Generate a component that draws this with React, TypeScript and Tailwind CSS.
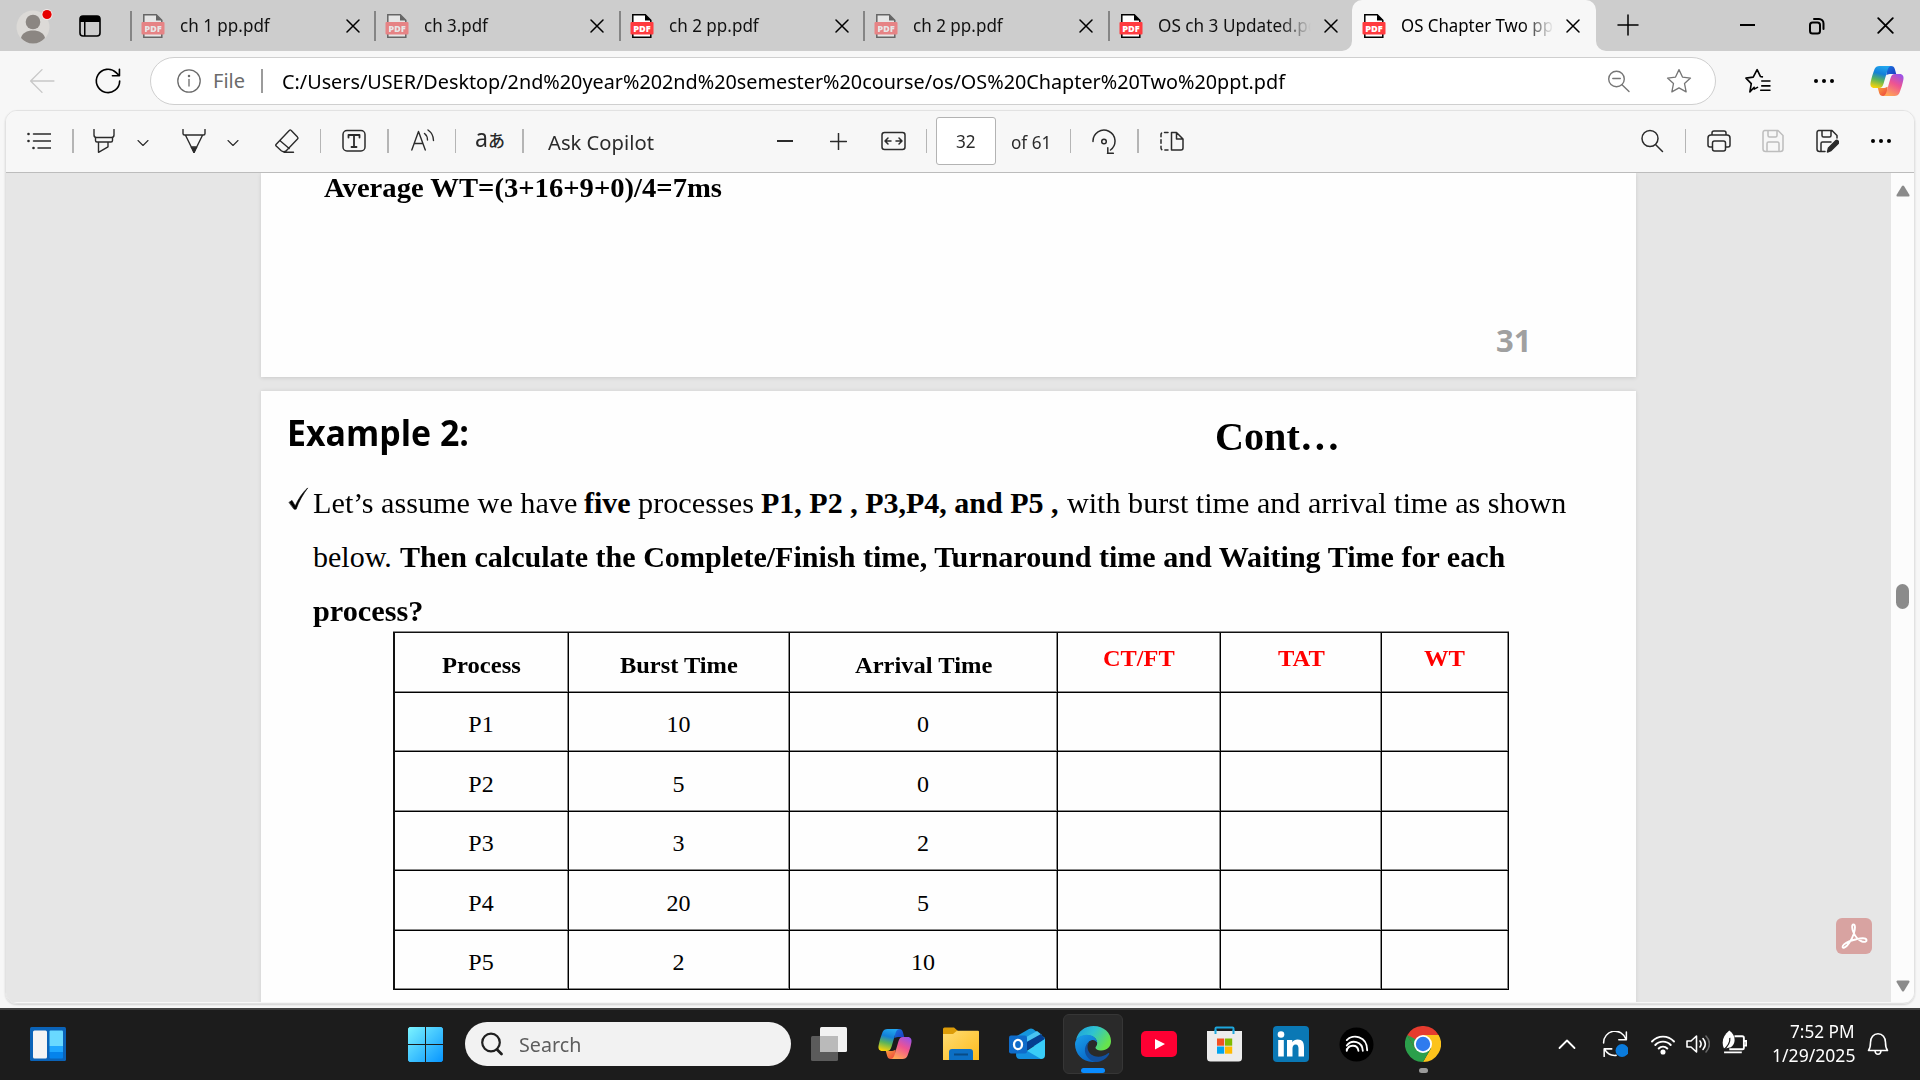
import React, { useLayoutEffect, useRef, useState } from "react";

/* Text that is stretched horizontally to fill the width given by its class. */
function Fit({ children, className = "" }: { children: string; className?: string }) {
  const outer = useRef<HTMLSpanElement>(null);
  const inner = useRef<HTMLSpanElement>(null);
  const [k, setK] = useState(1);
  useLayoutEffect(() => {
    if (outer.current && inner.current) setK(outer.current.clientWidth / inner.current.offsetWidth);
  }, []);
  return (
    <span ref={outer} className={"inline-block shrink-0 whitespace-pre text-left " + className}>
      <span ref={inner} className="inline-block origin-left" style={{ transform: `scaleX(${k})` }}>
        {children}
      </span>
    </span>
  );
}

type IconProps = { className?: string; children: React.ReactNode; box?: string; sw?: number };
function Icon({ className = "w-6 h-6", children, box = "0 0 24 24", sw = 1.5 }: IconProps) {
  return (
    <svg viewBox={box} className={"shrink-0 " + className} fill="none" stroke="currentColor" strokeWidth={sw} strokeLinecap="round" strokeLinejoin="round">
      {children}
    </svg>
  );
}

const Cross = ({ className = "", sw = 1.5 }: { className?: string; sw?: number }) => (
  <Icon box="0 0 14 14" sw={sw} className={className}>
    <path d="M1 1l12 12M13 1L1 13" />
  </Icon>
);

const Sep = ({ className = "" }: { className?: string }) => <div className={"h-6 shrink-0 bg-[#b5b5b5] " + className} />;

function PdfIcon({ dim }: { dim?: boolean }) {
  return (
    <svg viewBox="0 0 24 26" className={"h-[26px] w-6 shrink-0 " + (dim ? "opacity-50" : "")}>
      <path d="M2.800 1.800h12.500l5.500 5.400v17H2.800z" fill="#fff" stroke="#000" strokeWidth="1.500" />
      <path d="M15 1.500v6h6z" fill="#000" />
      <rect x="0.500" y="9" width="23" height="12.500" rx="1" fill="#ff3b3f" />
      <text x="12" y="18.700" textAnchor="middle" fontSize="9" fontWeight="800" fontFamily="Open Sans, sans-serif" fill="#fff" textLength="17.500" lengthAdjust="spacingAndGlyphs">PDF</text>
    </svg>
  );
}

function Copilot({ className, id }: { className: string; id: string }) {
  return (
    <svg viewBox="0 0 34 32" className={"shrink-0 " + className}>
      <defs>
        <linearGradient id={id + "a"} x1="0.6" y1="0" x2="0.35" y2="1">
          <stop offset="0" stopColor="#22a6ee" />
          <stop offset="0.35" stopColor="#1380d8" />
          <stop offset="0.65" stopColor="#5cb45a" />
          <stop offset="1" stopColor="#f5d20b" />
        </linearGradient>
        <linearGradient id={id + "b"} x1="0.8" y1="0" x2="0.3" y2="1">
          <stop offset="0" stopColor="#9a52e8" />
          <stop offset="0.45" stopColor="#ee5392" />
          <stop offset="1" stopColor="#ffa755" />
        </linearGradient>
        <linearGradient id={id + "c"} x1="0" y1="0" x2="1" y2="1">
          <stop offset="0" stopColor="#1a75e0" />
          <stop offset="1" stopColor="#1b3bc0" />
        </linearGradient>
        <linearGradient id={id + "d"} x1="0" y1="0" x2="1" y2="1">
          <stop offset="0" stopColor="#f9a33c" />
          <stop offset="1" stopColor="#ee4040" />
        </linearGradient>
      </defs>
      <path d="M17 1h4c2.300 0 3.200 1 3.900 3.300l1.300 4.700h-5c-2 0-3 .2-4.800 1.200z" fill={`url(#${id}c)`} />
      <path d="M17 31h-4c-2.300 0-3.200-1-3.900-3.300L7.800 23h5c2 0 3-.2 4.800-1.200z" fill={`url(#${id}d)`} />
      <path d="M9.500 1H21c-2 .6-2.800 2-3.600 4.500L13.600 18.500c-1 3.200-2 4.500-4.600 4.500H4.500C1 23 0 20.500.6 17.500 1.500 13 3 8 4.600 4 5.500 1.900 7 1 9.500 1z" fill={`url(#${id}a)`} />
      <path d="M24.500 31H13c2-.6 2.800-2 3.600-4.500l3.800-13c1-3.200 2-4.500 4.600-4.500h4.500c3.500 0 4.500 2.500 3.900 5.500-.9 4.500-2.400 9.500-4 13.500-.9 2.100-2.400 3-4.900 3z" fill={`url(#${id}b)`} />
    </svg>
  );
}

const tabs = [
  { title: "ch 1 pp.pdf", dim: true, width: "w-[90px]" },
  { title: "ch 3.pdf", dim: true, width: "w-[64px]" },
  { title: "ch 2 pp.pdf", dim: false, width: "w-[90px]" },
  { title: "ch 2 pp.pdf", dim: true, width: "w-[90px]" },
  { title: "OS ch 3 Updated.pdf", dim: false, width: "w-[166px]" },
];

function TabStrip() {
  return (
    <div className="flex h-[51px] bg-[#cdcdcd]">
      <div className="flex w-[130px] shrink-0 items-center">
        <svg viewBox="0 0 40 44" className="ml-[14px] h-11 w-10">
          <circle cx="19" cy="23" r="16.500" fill="#dcdad7" />
          <circle cx="19" cy="18" r="7.300" fill="#8b8682" />
          <path d="M7 34c1-5 6-7.500 12-7.500S30 29 31 34c-3 3.500-7 5.500-12 5.500S10 37.500 7 34z" fill="#8b8682" />
          <circle cx="33" cy="10.500" r="5.500" fill="#f3eaea" />
          <circle cx="33" cy="10.500" r="4.600" fill="#e60000" />
        </svg>
        <svg viewBox="0 0 22 22" className="ml-[25px] h-[22px] w-[22px]">
          <rect x="1" y="1" width="20" height="20" rx="3" fill="none" stroke="#000" strokeWidth="1.600" />
          <path d="M1 7V4a3 3 0 013-3h14a3 3 0 013 3v3zM5 7h1.500v14H5z" fill="#000" />
        </svg>
      </div>
      {tabs.map((t, i) => (
        <div key={i} className="flex w-[244.400px] shrink-0 items-center">
          <div className="h-[30px] w-[2px] bg-[#858585]" />
          <div className="ml-[9px]"><PdfIcon dim={t.dim} /></div>
          <div className={"ml-[15px] flex h-8 w-[156px] items-center overflow-hidden text-[18px] text-[#111] " + (i === 4 ? "[mask-image:linear-gradient(90deg,#000_78%,transparent_98%)]" : "")}>
            <Fit className={t.width}>{t.title}</Fit>
          </div>
          <Cross className="ml-[10px] h-[14px] w-[14px]" />
        </div>
      ))}
      <div className="relative flex h-[51px] w-[244px] items-center rounded-t-[10px] bg-[#f7f7f7]">
        <svg viewBox="0 0 10 10" className="absolute -left-[10px] bottom-0 h-[10px] w-[10px]"><path d="M10 0v10H0A10 10 0 0010 0z" fill="#f7f7f7" /></svg>
        <svg viewBox="0 0 10 10" className="absolute -right-[10px] bottom-0 h-[10px] w-[10px]"><path d="M0 0v10h10A10 10 0 010 0z" fill="#f7f7f7" /></svg>
        <div className="ml-[10px]"><PdfIcon /></div>
        <div className="ml-[15px] flex h-8 w-[156px] items-center overflow-hidden text-[18px] [mask-image:linear-gradient(90deg,#000_78%,transparent_98%)]">
          <Fit className="w-[158px]">OS Chapter Two ppt</Fit>
        </div>
        <Cross className="ml-[9px] h-[14px] w-[14px]" />
      </div>
      <Icon box="0 0 22 22" className="ml-[21px] mt-[14px] h-[22px] w-[22px]"><path d="M11 1v20M1 11h20" /></Icon>
      <div className="ml-[101px] mt-[24px] h-[2px] w-[15px] bg-black" />
      <Icon box="0 0 18 20" sw={2} className="ml-[53px] mt-[16px] h-5 w-[18px]">
        <rect x="2" y="6.500" width="10" height="11" rx="2.500" />
        <path d="M6 3h5a4.500 4.500 0 014.500 4.500V13" />
      </Icon>
      <Cross sw={1.5} className="ml-[51px] mt-[17px] h-[17px] w-[17px]" />
    </div>
  );
}

function AddressRow() {
  return (
    <div className="flex h-[59px] shrink-0 items-center pt-px">
      <Icon className="ml-[29px] h-[26px] w-[26px] text-[#c8c8c8]"><path d="M23 12H1.500M12 1.500L1.500 12 12 22.500" strokeWidth="1.300" /></Icon>
      <Icon className="ml-[39px] h-[28px] w-[28px]"><path d="M22 12a10 10 0 11-3-7.200l2.500 2.500M21.800 2v5.500h-6" strokeWidth="1.400" /></Icon>
      <div className="ml-[28px] flex h-12 w-[1566px] items-center rounded-full border border-[#cfcfcf] bg-white">
        <Icon className="ml-[26px] h-6 w-6 text-[#6b6b6b]" sw={1.3}><circle cx="12" cy="12" r="11.200" /><path d="M12 10.500v6.500" /><circle cx="12" cy="7" r=".6" fill="currentColor" /></Icon>
        <Fit className="ml-[12px] w-[32px] text-[20px] text-[#6b6b6b]">File</Fit>
        <div className="ml-[16px] h-6 w-[2px] bg-[#9b9b9b]" />
        <Fit className="ml-[19px] w-[1003px] text-[20.500px]">C:/Users/USER/Desktop/2nd%20year%202nd%20semester%20course/os/OS%20Chapter%20Two%20ppt.pdf</Fit>
        <Icon className="ml-auto h-[24px] w-[24px] text-[#767676]" sw={1.4}><circle cx="9.500" cy="10" r="7.800" /><path d="M15 15.800l7 6.700M5.800 9.500h7.500" /></Icon>
        <Icon className="ml-[35px] mr-[23px] h-[26px] w-[26px] text-[#767676]" sw={1.2}><path d="M12 1.500l3.200 6.900 7.400.9-5.500 5.100 1.500 7.600L12 18.300 5.400 22l1.500-7.600L1.400 9.300l7.400-.9z" /></Icon>
      </div>
      <Icon className="ml-[29px] h-[26px] w-[26px]" sw={1.5}><path d="M8.500 17.800L4.500 22l1.300-7.600L.9 9.300l6.700-.9L11.200 1.500l3 6.300 1.800.4M15.500 12H23M15.500 16.500H23M14.500 20.500H23M8.500 19.500l3-1.600" /></Icon>
      <svg viewBox="0 0 22 6" className="ml-[42px] h-[6px] w-[22px]"><circle cx="3" cy="3" r="2" /><circle cx="11" cy="3" r="2" /><circle cx="19" cy="3" r="2" /></svg>
      <Copilot id="top" className="ml-[35px] h-[32px] w-[34px]" />
    </div>
  );
}

const Chevron = () => <Icon box="0 0 12 12" sw={1.1} className="ml-[21px] mt-1 h-3 w-3"><path d="M1 3.500l5 5 5-5" /></Icon>;

function Toolbar() {
  return (
    <div className="flex h-[62px] shrink-0 items-center border-b border-[#bcbcbc] bg-[#f7f7f7] pb-px text-[#2b2b2b]">
      <Icon className="ml-[21px] h-6 w-6"><path d="M6.500 5H24M6.500 12H24M11 19H24" /><g fill="currentColor" stroke="none"><circle cx="1.500" cy="5" r="1.300" /><circle cx="1.500" cy="12" r="1.300" /><circle cx="6.500" cy="19" r="1.300" /></g></Icon>
      <Sep className="ml-[21px] w-[2px]" />
      <Icon className="ml-[18px] h-6 w-6" sw={1.4}><path d="M2 .5v5.500a2.500 2.500 0 002.500 2.500h15A2.500 2.500 0 0022 6V.5M3.500 8.800v2.700a1.500 1.500 0 001.500 1.500h14a1.500 1.500 0 001.500-1.500V8.800M6.500 13v10.300l9.500-5.500V13" /></Icon>
      <Chevron />
      <Icon className="ml-[33px] h-6 w-6" sw={1.4}><path d="M1 .5v4A1.500 1.500 0 002.500 6h19A1.500 1.500 0 0023 4.500v-4M3.500 6.200L12 23.500l8.500-17.300M9 18h6" /><path d="M10 19h4l-2 4.500z" fill="currentColor" /></Icon>
      <Chevron />
      <Icon className="ml-[36px] h-6 w-6" sw={1.4}><path d="M1 15.500L14.500 1.200a1 1 0 011.500 0l6.500 6.900a1.500 1.500 0 010 2L11.500 21.500a4 4 0 01-5.500.1L1.200 17a1 1 0 01-.2-1.500zM4.800 11.500l9.400 8M9 23.300h9.500" /></Icon>
      <Sep className="ml-[21px] w-px" />
      <Icon className="ml-[21px] h-6 w-6" sw={1.5}><rect x="1" y="1.500" width="22" height="20.500" rx="4" /><path d="M6.500 8.500V6h11v2.500M12 6v12M9.500 18h5" strokeWidth="1.800" /></Icon>
      <Sep className="ml-[21px] w-[2px]" />
      <Icon className="ml-[22px] h-6 w-6" sw={1.4}><path d="M.8 21L7.500 2.500 14.300 21M3.200 14.500h8.700M13.500 4.500c2 1.500 3 3.500 3 6.500M17 1c3.500 2.500 5.500 6 5.500 10.500" /></Icon>
      <Sep className="ml-[20px] w-px" />
      <div className="ml-[19px] flex w-7 items-center pb-1 text-[25px] leading-6"><Fit className="mt-[-4px] w-[13px]">a</Fit><span className="mt-[2px] font-['Noto_Sans_CJK_JP'] text-[17px] font-medium">あ</span></div>
      <Sep className="ml-[19px] w-[2px]" />
      <Fit className="ml-[24px] mt-[3px] w-[106px] text-[20px]">Ask Copilot</Fit>
      <div className="ml-[123px] h-[1.500px] w-4 bg-[#2b2b2b]" />
      <Icon box="0 0 17 17" className="ml-[37px] h-[17px] w-[17px]"><path d="M8.500.5v16M.5 8.500h16" /></Icon>
      <Icon box="0 0 25 20" className="ml-[34px] h-5 w-[25px]"><rect x="1" y="1.500" width="23" height="17" rx="2.500" /><path d="M10 10H4.500M7 7l-3 3 3 3M15 10h5.500M18 7l3 3-3 3" /></Icon>
      <Sep className="ml-[20px] w-px" />
      <div className="ml-[9px] flex h-12 w-[60px] items-center justify-center rounded-[3px] border border-[#b3b3b3] bg-white pt-px text-[18px]"><Fit className="w-[20px]">32</Fit></div>
      <Fit className="ml-[15px] mt-[2px] w-[40px] text-[18px]">of 61</Fit>
      <Sep className="ml-[19px] w-px" />
      <Icon className="ml-[21px] h-[25px] w-6"><path d="M1 12A11 11 0 1118.500 20.500M15.500 23.800h5.800M15.800 23.500v-5.200" /><circle cx="12" cy="12" r="2.300" /></Icon>
      <Sep className="ml-[21px] w-[2px]" />
      <Icon className="ml-[21px] h-6 w-6" sw={1.5}><path d="M11.500 3.500V21H21a2 2 0 002-2v-9l-6.500-6.500zM16.500 3.500V10H23" /><path d="M8 3.500H3A2 2 0 001 5.500V19a2 2 0 002 2h5" strokeDasharray="3.500 3" /></Icon>
      <div className="ml-auto mr-[22px] flex items-center">
        <Icon className="h-6 w-6"><circle cx="9" cy="9.500" r="8" /><path d="M14.500 15.500l7 7" /></Icon>
        <Sep className="ml-[20px] w-px" />
        <Icon className="ml-[21px] h-6 w-6"><path d="M5 18H3a2 2 0 01-2-2V9a3 3 0 013-3h16a3 3 0 013 3v7a2 2 0 01-2 2h-2M5 6V4a2 2 0 012-2h10a2 2 0 012 2v2" /><rect x="5.500" y="12" width="13" height="10" rx="2" /></Icon>
        <Icon className="ml-[30px] h-6 w-6 text-[#bdbdbd]"><path d="M3.500 1.500H17l5 5v13.500a2.500 2.500 0 01-2.500 2.500h-15A2.500 2.500 0 012 20V3.500a2 2 0 011.500-2zM7 1.500v5A1.500 1.500 0 008.500 8h6A1.500 1.500 0 0016 6.500v-5M6 22.500V14.500A1.500 1.500 0 017.500 13h9a1.500 1.500 0 011.500 1.500v8" /></Icon>
        <Icon className="ml-[30px] h-6 w-6"><path d="M10 22.500H4.500A2.500 2.500 0 012 20V3.500a2 2 0 011.500-2H17l5 5V9M7 1.500v5A1.500 1.500 0 008.500 8h6A1.500 1.500 0 0016 6.500v-5M6 22.500V14.500A1.500 1.500 0 017.500 13H16" /><path d="M12.500 23l1-4 7.500-7.500c1-1 3.500 1.300 2.400 2.600L16 21.500z" fill="currentColor" /></Icon>
        <svg viewBox="0 0 22 6" className="ml-[31px] h-[6px] w-[22px]"><circle cx="3" cy="3" r="2" /><circle cx="11" cy="3" r="2" /><circle cx="19" cy="3" r="2" /></svg>
      </div>
    </div>
  );
}

const rows = [
  ["P1", "10", "0"],
  ["P2", "5", "0"],
  ["P3", "3", "2"],
  ["P4", "20", "5"],
  ["P5", "2", "10"],
];
const cell = "border-b border-r border-black shadow-[inset_-1px_-1px_0_#8a8a8a] flex items-center justify-center";

function ProcessTable() {
  return (
    <div className="ml-[132px] grid w-[1116px] auto-rows-[59.450px] grid-cols-[174px_221px_268px_163px_161px_127px] grid-rows-[60px] border-l-2 border-t border-[#111] text-[24px] shadow-[0_-1px_0_#8a8a8a]">
      <div className={cell + " pr-px pt-[5px] font-bold"}><Fit className="w-[79px]">Process</Fit></div>
      <div className={cell + " pt-[5px] font-bold"}><Fit className="w-[118px]">Burst Time</Fit></div>
      <div className={cell + " pr-px pt-[5px] font-bold"}><Fit className="w-[137px]">Arrival Time</Fit></div>
      <div className={cell + " pb-[9px] font-bold text-[#ff0000]"}><Fit className="w-[72px]">CT/FT</Fit></div>
      <div className={cell + " pb-[9px] font-bold text-[#ff0000]"}><Fit className="w-[47px]">TAT</Fit></div>
      <div className={cell + " pb-[9px] pr-[2px] font-bold text-[#ff0000]"}><Fit className="w-[41px]">WT</Fit></div>
      {rows.map((r) => (
        <React.Fragment key={r[0]}>
          {r.map((v, i) => <div key={i} className={cell + " pr-px pt-[4px]"}>{v}</div>)}
          <div className={cell} /><div className={cell} /><div className={cell} />
        </React.Fragment>
      ))}
    </div>
  );
}

function Viewer() {
  return (
    <div className="relative flex h-[829px] overflow-hidden bg-[#e6e6e6] font-['Liberation_Serif',serif] text-black">
      <div className="ml-[255px] w-[1375px] shrink-0">
        <div className="flex h-[204px] flex-col justify-between bg-[#fefefe] shadow-[0_1px_4px_rgba(0,0,0,0.12)]">
          <Fit className="ml-[63px] mt-[-2px] w-[398px] text-[28px] font-bold leading-[34px]">Average WT=(3+16+9+0)/4=7ms</Fit>
          <Fit className="mb-[16px] ml-[1235px] w-[35px] font-['Open_Sans'] text-[31px] font-bold leading-[42px] text-[#a0a0a0]">31</Fit>
        </div>
        <div className="mt-[14px] h-[640px] bg-[#fefefe] shadow-[0_0_4px_rgba(0,0,0,0.1)]">
          <div className="flex h-[84px]">
            <Fit className="ml-[26px] mt-[18px] w-[182px] font-['Open_Sans'] text-[35px] font-bold leading-[48px]">Example 2:</Fit>
            <Fit className="ml-[746px] mt-[21px] w-[125px] text-[40.500px] font-bold leading-[50px]">Cont…</Fit>
          </div>
          <div className="flex h-[54px] items-center text-[30px]">
            <Icon box="0 0 22 26" className="-mt-[6px] ml-[26px] h-[24px] w-[22px]" sw={0.7}><path d="M1.500 16.500l3-2 3.500 6C11.500 12.500 16 6 21.500 1 16.500 8 12 15 9 24H7z" fill="#000" /></Icon>
            <Fit className="ml-[4px] w-[264px]">Let’s assume we have</Fit>
            <Fit className="ml-[7px] w-[47px] font-bold">five</Fit>
            <Fit className="ml-[7px] w-[116px]">processes</Fit>
            <Fit className="ml-[7px] w-[298px] font-bold">P1, P2 , P3,P4, and P5 ,</Fit>
            <Fit className="ml-[8px] w-[499px]">with burst time and arrival time as shown</Fit>
          </div>
          <div className="ml-[52px] flex h-[54px] items-center text-[30px]">
            <Fit className="w-[79px]">below.</Fit>
            <Fit className="ml-[8px] w-[1105px] font-bold">Then calculate the Complete/Finish time, Turnaround time and Waiting Time for each</Fit>
          </div>
          <div className="ml-[52px] flex h-[49px] items-center pt-[5px] text-[30px]">
            <Fit className="w-[110px] font-bold">process?</Fit>
          </div>
          <ProcessTable />
        </div>
      </div>
      <div className="ml-auto flex w-[23px] flex-col items-center bg-[#fcfcfc]">
        <svg viewBox="0 0 14 12" className="mt-[12px] h-3 w-[14px]"><path d="M6 1q1-1 2 0l5.500 9q.4 1.500-1 1.500H1.500q-1.400 0-1-1.500z" fill="#8b8b8b" /></svg>
        <div className="mt-[387px] h-[25px] w-[13px] rounded-full bg-[#8b8b8b]" />
        <svg viewBox="0 0 14 12" className="mb-[10px] mt-auto h-3 w-[14px]"><path d="M6 11q1 1 2 0l5.500-9q.4-1.500-1-1.500H1.500q-1.400 0-1 1.500z" fill="#8b8b8b" /></svg>
      </div>
      <div className="absolute right-[42px] top-[745px] flex h-9 w-9 items-center justify-center rounded-[6px] bg-[#d8a3a1]">
        <svg viewBox="0 0 36 36" className="h-9 w-9" fill="none" stroke="#fff" strokeWidth="1.900"><path d="M17.500 6.500c-2 0-1.500 4.500 0 8 1.300 3 4.500 7.500 8.500 9 3 1 5-.2 4.500-1.700-.7-2-5-1.800-10-.6-5 1-10 3-12.500 5.200-2 1.900-1.800 4 .3 3.300 3-1.200 7.500-8 9.500-14 1.500-4.700 1.700-9.200-.3-9.200z" /></svg>
      </div>
    </div>
  );
}

const Slot = ({ children }: { children: React.ReactNode }) => <div className="flex h-full w-[66px] shrink-0 items-center justify-center">{children}</div>;

function Taskbar() {
  return (
    <div className="flex h-[72px] shrink-0 items-center border-t-2 border-[#404040] bg-[#1c1c1c] pb-[2px] text-white">
      <svg viewBox="0 0 36 34" className="ml-[30px] h-[34px] w-9">
        <rect width="36" height="34" rx="1.500" fill="#0a63b8" />
        <rect x="3" y="3.500" width="14" height="28" rx="1.500" fill="#f4f4f4" />
        <path d="M19.500 4.500a1 1 0 011-1H32a1 1 0 011 1V19H19.500z" fill="#69d9ff" />
        <path d="M19.500 19H33v6H19.500z" fill="#1fa7ff" />
        <path d="M19.500 25H33v5.500a1 1 0 01-1 1H20.500a1 1 0 01-1-1z" fill="#0583ec" />
      </svg>
      <svg viewBox="0 0 35 35" className="ml-[342px] h-[35px] w-[35px]">
        <defs><linearGradient id="win" gradientUnits="userSpaceOnUse" x1="0" y1="0" x2="35" y2="35"><stop stopColor="#7cf4ff" /><stop offset="1" stopColor="#0795ff" /></linearGradient></defs>
        <path d="M1.500 0H17v17H0V1.500zM18 0h15.500L35 1.500V17H18zM0 18h17v17H1.500L0 33.500zM18 18h17v15.500L33.500 35H18z" fill="url(#win)" />
      </svg>
      <div className="ml-[22px] flex h-11 w-[326px] items-center rounded-full bg-[#f2f2f2]">
        <Icon className="ml-[15px] h-6 w-6 text-[#1f1f1f]" sw={2.2}><circle cx="11" cy="10.500" r="8.800" /><path d="M17 17.500l4.500 4.500" strokeWidth="2.800" /></Icon>
        <Fit className="ml-[15px] mt-px w-[62px] text-[20px] text-[#5d5d5d]">Search</Fit>
      </div>
      <div className="ml-[5px] flex h-full">
        <Slot>
          <svg viewBox="0 0 36 34" className="h-[34px] w-9"><rect x="9" y="0" width="27" height="25" rx="1.500" fill="#f2f2f2" /><rect x="0" y="9" width="27" height="25" rx="1.500" fill="#5b5b5b" /><path d="M9 9h18v16H9z" fill="#bababa" /></svg>
        </Slot>
        <Slot><Copilot id="task" className="h-[32px] w-[34px]" /></Slot>
        <Slot>
          <svg viewBox="0 0 36 34" className="h-[34px] w-9">
            <defs><linearGradient id="fold" x1="0" y1="0" x2="1" y2="1"><stop stopColor="#ffdc73" /><stop offset="1" stopColor="#fdbb1c" /></linearGradient></defs>
            <path d="M0 2a1.500 1.500 0 011.500-1.500H11L15 4v6H0z" fill="#dd9c08" />
            <path d="M0 7h10l4-3.200h21a1 1 0 011 1V33H0z" fill="url(#fold)" />
            <path d="M6 33v-8a3 3 0 013-3h18a3 3 0 013 3v8z" fill="#0c6fc4" />
            <path d="M11 27.500h14" stroke="#084b85" strokeWidth="2" />
          </svg>
        </Slot>
        <Slot>
          <svg viewBox="0 0 36 32" className="h-8 w-9">
            <path d="M6 9L20 1q2-1 4 0l12 9v8H12z" fill="#1697dc" />
            <path d="M12 12L28 3l5 4-18 12z" fill="#48c4f2" />
            <path d="M14 16L32 6l4 5-19 12z" fill="#053f90" />
            <path d="M36 11v16a4 4 0 01-4 4H14l-1-5z" fill="#39cdf8" />
            <path d="M8 17l24 14H11a4 4 0 01-4-4z" fill="#1390df" />
            <rect x="0" y="7.500" width="18" height="18" rx="2" fill="#0f6cca" />
            <ellipse cx="9" cy="16.500" rx="4" ry="4.700" fill="none" stroke="#fff" strokeWidth="2.300" />
          </svg>
        </Slot>
        <Slot>
          <div className="relative flex h-[60px] w-[60px] items-center justify-center rounded-[6px] border border-[#363636] bg-[#2a2a2a]">
            <svg viewBox="0 0 36 36" className="h-9 w-9">
              <defs>
                <linearGradient id="e1" x1="0" y1="0" x2="1" y2=".5"><stop stopColor="#1a9bdf" /><stop offset=".5" stopColor="#2fc3d0" /><stop offset="1" stopColor="#66e34c" /></linearGradient>
                <linearGradient id="e2" x1="0" y1="0" x2=".6" y2="1"><stop stopColor="#1aa0ea" /><stop offset="1" stopColor="#0866c8" /></linearGradient>
              </defs>
              <path d="M1 14C3 5 10 0 18.500 0 29 0 36 7 36 15c0 6-4.500 9.500-9.500 9.500-4 0-6.200-1.500-6-3 .2-1 1.700-1.700 1.700-4.500 0-4-4-7.500-9.500-7.500C7.500 9.500 3 11.500 1 14z" fill="url(#e1)" />
              <path d="M0 18c.3-5.500 5.500-9.200 11.500-9.200 6 0 10.500 3.500 10.700 8-1-2-3.500-3.300-5.700-2.600C12 15.500 10 21 12 26c1.600 4.500 5 8 9.500 9.500C10 38 0 29.500 0 18z" fill="url(#e2)" />
              <path d="M14.500 15.500c-3.500 4-2.500 12 4.500 14.500 5 1.700 10 .4 14-2.700.9-.6 1.600.1 1.100.9C31 33 27 35.300 22 35.900 14.500 36 9 29 10 22.500c.5-3 2-5.500 4.500-7z" fill="#11509f" />
            </svg>
            <div className="absolute bottom-0 h-[5px] w-6 rounded-full bg-[#0a8cff]" />
          </div>
        </Slot>
        <Slot><svg viewBox="0 0 36 26" className="h-[26px] w-9"><rect width="36" height="26" rx="5" fill="#ff0033" /><path d="M14 8l10 5-10 5.500z" fill="#fff" /></svg></Slot>
        <Slot>
          <svg viewBox="0 0 35 36" className="mr-px h-9 w-[35px]"><path d="M8.500 7V2.500A1 1 0 019.500 1.500h16a1 1 0 011 1V7" stroke="#1da6dc" strokeWidth="2" fill="none" /><path d="M0 5h35v27a3.500 3.500 0 01-3.500 3.500h-28A3.500 3.500 0 010 32z" fill="#ececec" /><path d="M8.500 4v4M26.500 4v4" stroke="#1da6dc" strokeWidth="2" /><path d="M10 12.500h7.200v7.200H10z" fill="#f25022" /><path d="M18 12.500h7.200v7.200H18z" fill="#7fba00" /><path d="M10 20.500h7.200v7.200H10z" fill="#00a4ef" /><path d="M18 20.500h7.200v7.200H18z" fill="#ffb900" /></svg>
        </Slot>
        <Slot>
          <svg viewBox="0 0 36 36" className="mr-px h-9 w-9"><rect width="36" height="36" rx="4" fill="#0a78b5" /><circle cx="8" cy="8.500" r="3.300" fill="#fff" /><path d="M5.200 14h5.600v16.500H5.200zM14 14h5.300v2.300c1-1.700 3-2.700 5.300-2.700 5 0 6.400 3 6.400 7.700v9.200h-5.500v-8c0-2.300-.6-4-2.800-4-2.300 0-3.200 1.700-3.200 4v8H14z" fill="#fff" /></svg>
        </Slot>
        <Slot>
          <svg viewBox="0 0 36 36" className="mr-px h-[35px] w-[35px]" fill="none" stroke="#fff" strokeWidth="1.900" strokeLinecap="round"><circle cx="18" cy="18" r="17.500" fill="#000" stroke="none" /><path d="M8 13.500C14 7 29 9 29 24M8 19c5-6.500 16-4.500 16.500 5.500M8 24.500c1-6.500 11-7.500 12 0M8 24.500v-2" /></svg>
        </Slot>
        <Slot>
          <div className="relative flex h-full w-9 items-center justify-center">
            <svg viewBox="0 0 36 36" className="h-9 w-9"><path d="M18 18L2.400 9A18 18 0 0133.600 9z" fill="#e63b2e" /><path d="M18 9h15.600A18 18 0 0118 36l7.800-13.500z" fill="#fcc31c" /><path d="M2.400 9A18 18 0 0018 36l7.800-13.500L18 18l-7.800 4.500z" fill="#2b9f4b" /><path d="M2.400 9L10.200 22.500 18 9z" fill="#e63b2e" /><path d="M2.400 9l7.800 13.500L12 14z" fill="#2b9f4b" /><circle cx="18" cy="18" r="9" fill="#fff" /><circle cx="18" cy="18" r="7.200" fill="#2f7bee" /></svg>
            <div className="absolute bottom-[5px] h-[5px] w-[9px] rounded-full bg-[#9a9a9a]" />
          </div>
        </Slot>
      </div>
      <Icon box="0 0 18 12" className="ml-[102px] h-3 w-[18px]" sw={1.8}><path d="M1.500 10L9 2.500l7.500 7.500" /></Icon>
      <Icon className="ml-[26px] h-[26px] w-[26px]" sw={1.4}><path d="M1.500 11A10.500 10.500 0 0122 7.500M22.500 1v7h-7M13 22.500c-5 .5-8.500-2-10.500-5.500M2 23.500v-7h7" /><circle cx="18.500" cy="18" r="6" fill="#0a7bdc" stroke="none" /></Icon>
      <Icon className="ml-[23px] h-6 w-6" sw={1.9}><path d="M1 9.500C7 3 17 3 23 9.500M4.300 13c4-4.500 11.400-4.500 15.400 0M7.700 16.500c2.200-2.500 6.400-2.500 8.600 0" /><circle cx="12" cy="20" r="1.600" fill="#fff" /></Icon>
      <Icon className="ml-[11px] h-6 w-6" sw={1.6}><path d="M1 9v6h4l5.500 5V4L5 9zM14 9c1.500 2 1.500 4 0 6M17 6.500c3 3.500 3 7.500 0 11" /><path d="M20 4c4.300 5 4.300 11 0 16" stroke="#666" /></Icon>
      <svg viewBox="0 0 24 24" className="-mt-[5px] ml-[12px] h-[26px] w-[25px] shrink-0"><path d="M12 6.500h7.500A1.500 1.500 0 0121 8v9.500a1.500 1.500 0 01-1.500 1.500H7M2 22h17M21 11h2.200v4.500H21" fill="none" stroke="#fff" strokeWidth="1.800" /><path d="M7 1c6 4 7 12 1.500 16L2 18.500C-1 12 1 6 7 1z" fill="#fff" /><path d="M7.500 8C8 12 6 16 1 20" fill="none" stroke="#1c1c1c" strokeWidth="1.200" /></svg>
      <div className="-mt-[3px] ml-[24px] flex w-[84px] flex-col items-end text-[18px] leading-[24px]">
        <Fit className="h-6 w-[65px]">7:52 PM</Fit>
        <Fit className="h-6 w-[83px]">1/29/2025</Fit>
      </div>
      <Icon className="ml-[11px] h-6 w-6" sw={1.6}><path d="M2.500 18.500c1.500-2 2-3.500 2-8C4.500 5.500 7.500 1.800 12 1.800s7.500 3.700 7.500 8.700c0 4.500.5 6 2 8zM9 19c.3 2 1.500 3.200 3 3.200s2.700-1.200 3-3.200" /></Icon>
    </div>
  );
}

export default function App() {
  return (
    <div className="flex h-[1080px] w-[1920px] flex-col overflow-hidden bg-[#f7f7f7] font-['Noto_Sans','Noto_Sans_CJK_JP',sans-serif] text-black">
      <TabStrip />
      <AddressRow />
      <div className="mx-[5px] h-[894px] shrink-0 overflow-hidden rounded-[12px] border border-[#e2e2e2] shadow-[0_1px_2px_rgba(0,0,0,0.15)]">
        <Toolbar />
        <Viewer />
      </div>
      <div className="h-1 shrink-0" />
      <Taskbar />
    </div>
  );
}
